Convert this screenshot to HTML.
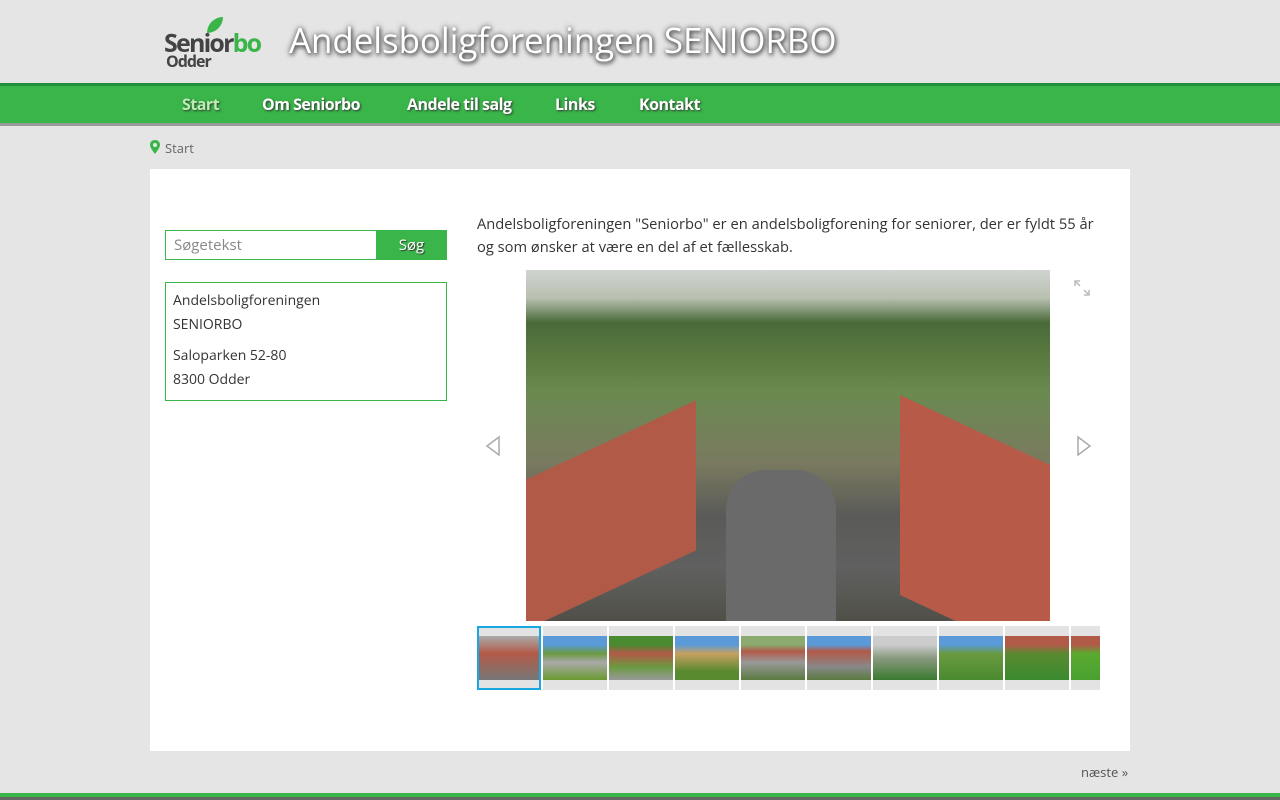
<!DOCTYPE html>
<html><head><meta charset="utf-8"><style>
body{margin:0;background:#e5e5e5;font-family:"Open Sans","Liberation Sans",sans-serif;width:1280px;height:800px;overflow:hidden;position:relative}
.abs{position:absolute}
.title{left:289px;top:17px;font-size:35px;color:#fff;text-shadow:0 0 6px #555,1px 2px 4px #444;white-space:nowrap;letter-spacing:-0.1px}
.nav{left:0;top:83px;width:1280px;height:37px;background:#3ab54a;border-top:3px solid #1f8f3a;border-bottom:3px solid #999}
.nav span{position:absolute;top:7px;font-size:16px;font-weight:bold;color:#fff;text-shadow:1px 1px 2px #333;letter-spacing:-0.5px}
.main{left:150px;top:169px;width:980px;height:582px;background:#fff}
.thumb{position:absolute;top:626px;width:64px;height:64px;background:#e3e3e3}
.thumb i{position:absolute;left:0;top:10px;width:64px;height:44px;display:block}
</style></head><body>
<div class="abs" style="left:164px;top:26px;font-size:25px;font-weight:bold;color:#444;letter-spacing:-1.8px">Senior<span style="color:#3ab54a">bo</span></div>
<div class="abs" style="left:207px;top:17px;width:16px;height:16px;background:#3ab54a;border-radius:16px 0 16px 0"></div>
<div class="abs" style="left:166px;top:50px;font-size:16px;font-weight:bold;color:#444;letter-spacing:-1px">Odder</div>
<div class="abs title">Andelsboligforeningen SENIORBO</div>
<div class="abs nav">
<span style="left:182px;color:#b9f0b0">Start</span><span style="left:262px">Om Seniorbo</span><span style="left:407px">Andele til salg</span><span style="left:555px">Links</span><span style="left:639px">Kontakt</span></div>
<svg class="abs" style="left:150px;top:140px" width="10" height="14" viewBox="0 0 10 14"><path d="M5 0C2 0 0 2 0 5c0 3 5 9 5 9s5-6 5-9c0-3-2-5-5-5zm0 7a2 2 0 110-4 2 2 0 010 4z" fill="#3ab54a"/></svg>
<div class="abs" style="left:165px;top:139px;font-size:13px;color:#666">Start</div>
<div class="abs main"></div>
<div class="abs" style="left:165px;top:230px;border:1px solid #3ab54a;background:#fff;font-size:15px;color:#888;line-height:28px;padding-left:8px;box-sizing:border-box;width:212px;height:30px">Søgetekst</div>
<div class="abs" style="left:376px;top:230px;width:71px;height:30px;background:#3ab54a;color:#fff;font-size:15px;line-height:30px;text-align:center;text-shadow:1px 1px 1px #333">Søg</div>
<div class="abs" style="left:165px;top:282px;width:282px;height:119px;border:1px solid #3ab54a;box-sizing:border-box;padding:6px 7px;font-size:14px;color:#333;line-height:24px">Andelsboligforeningen<br>SENIORBO<div style="height:7px"></div>Saloparken 52-80<br>8300 Odder</div>
<div class="abs" style="left:477px;top:213px;width:626px;font-size:14.7px;color:#333;line-height:23px">Andelsboligforeningen "Seniorbo" er en andelsboligforening for seniorer, der er fyldt 55 år og som ønsker at være en del af et fællesskab.</div>
<div class="abs" style="left:526px;top:270px;width:524px;height:351px;overflow:hidden;background:linear-gradient(180deg,#d0d4d0 0%,#b8c0b0 8%,#4a6a3a 15%,#5a7a40 25%,#6a8a50 35%,#7a7a60 55%,#5a5a58 70%,#606060 85%,#505048 100%)">
<div style="position:absolute;left:0;top:170px;width:170px;height:150px;background:#b25a48;transform:skewY(-25deg)"></div>
<div style="position:absolute;right:0;top:160px;width:150px;height:200px;background:#b85a48;transform:skewY(25deg)"></div>
<div style="position:absolute;left:200px;top:200px;width:110px;height:151px;background:#6a6a6a;border-radius:40px 40px 0 0"></div></div>
<svg class="abs" style="left:1073px;top:279px" width="18" height="18" viewBox="0 0 18 18" fill="none" stroke="#bbb" stroke-width="1.5"><path d="M2 7V2h5M2 2l5 5M16 11v5h-5M16 16l-5-5"/></svg>
<svg class="abs" style="left:485px;top:435px" width="16" height="22"><path d="M14 2L2 11l12 9z" fill="#fff" stroke="#aaa" stroke-width="1.5"/></svg>
<svg class="abs" style="left:1076px;top:435px" width="16" height="22"><path d="M2 2l12 9-12 9z" fill="#fff" stroke="#aaa" stroke-width="1.5"/></svg>
<div class="thumb" style="left:477px;width:64px;border:2px solid #1aa7e0;box-sizing:border-box"><i style="top:8px;width:60px;background:linear-gradient(#aaa,#b25a48 40%,#777)"></i></div>
<div class="thumb" style="left:543px"><i style="background:linear-gradient(#5a9ad8 20%,#6a9a40 40%,#aaa 60%,#6a9a30)"></i></div>
<div class="thumb" style="left:609px"><i style="background:linear-gradient(#4a8a30 20%,#b25a48 40%,#6a9a40 70%,#999)"></i></div>
<div class="thumb" style="left:675px"><i style="background:linear-gradient(#5a9ad8 20%,#c8a060 40%,#5a8a30 80%)"></i></div>
<div class="thumb" style="left:741px"><i style="background:linear-gradient(#8aaa70 20%,#b25a48 35%,#999 60%,#5a7a40)"></i></div>
<div class="thumb" style="left:807px"><i style="background:linear-gradient(#5a9ad8 20%,#b25a48 35%,#888 70%,#5a7a40)"></i></div>
<div class="thumb" style="left:873px"><i style="background:linear-gradient(#ccc 20%,#8a9a80 50%,#3a7a30)"></i></div>
<div class="thumb" style="left:939px"><i style="background:linear-gradient(#5a9ad8 20%,#6a9a40 40%,#4a8a30)"></i></div>
<div class="thumb" style="left:1005px"><i style="background:linear-gradient(#b25a48 20%,#5a8a30 40%,#3a8a30)"></i></div>
<div class="thumb" style="left:1071px;width:29px"><i style="width:29px;background:linear-gradient(#b25a48 20%,#5aaa30 40%,#4aa030)"></i></div>
<div class="abs" style="left:1081px;top:763px;font-size:13px;color:#555">næste »</div>
<div class="abs" style="left:0;top:793px;width:1280px;height:4px;background:#3ab54a"></div>
<div class="abs" style="left:0;top:797px;width:1280px;height:3px;background:#666"></div>
</body></html>
